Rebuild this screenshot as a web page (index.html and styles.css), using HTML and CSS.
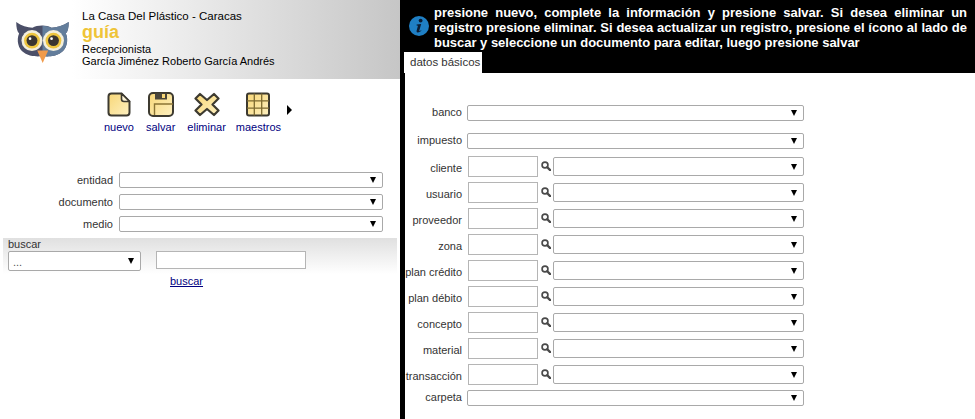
FILE: index.html
```html
<!DOCTYPE html>
<html lang="es">
<head>
<meta charset="utf-8">
<title>guía</title>
<link rel="stylesheet" href="styles.css">
</head>
<body>
<svg class="defs" width="0" height="0" aria-hidden="true">
  <defs>
    <linearGradient id="gold" x1="0" y1="0" x2="1" y2="1">
      <stop offset="0" stop-color="#f8d777"/>
      <stop offset="1" stop-color="#fdf0c0"/>
    </linearGradient>
    <symbol id="lupa" viewBox="0 0 12 12">
      <circle cx="4.800" cy="4.800" r="3.500" fill="#fff" stroke="#4a4a4a" stroke-width="2"/>
      <path d="M7.500 7.500 L11 11" stroke="#4a4a4a" stroke-width="2.800" stroke-linecap="round"/>
    </symbol>
  </defs>
</svg>
<div class="page">
  <aside class="left">
    <header class="head">
      <svg class="owl" viewBox="0 0 56 44" width="54" height="42">
        <path d="M1 1 C6 5 13 7 18 7 C23 4 33 4 38 7 C43 7 50 5 56 1 C56 7 55 11 53 13 C56 20 54 29 48 33 C41 38 34 37 28.500 37 C23 37 16 38 9 33 C3 29 1 20 4 13 C2 11 1 7 1 1 Z" fill="#4b4f68"/>
        <path d="M28.500 5 C32 5 35 6 38 7 C43 7 50 5 56 1 C56 7 55 11 53 13 C56 20 54 29 48 33 C41 38 34 37 28.500 37 Z" fill="#637d9b"/>
        <circle cx="17.500" cy="20.500" r="11" fill="#f3eedb"/>
        <circle cx="40" cy="20.500" r="11" fill="#f3eedb"/>
        <circle cx="17.500" cy="20.500" r="8.300" fill="#eec53e"/>
        <circle cx="40" cy="20.500" r="8.300" fill="#eec53e"/>
        <circle cx="17.500" cy="20.500" r="5.700" fill="#3a3530"/>
        <circle cx="40" cy="20.500" r="5.700" fill="#3a3530"/>
        <circle cx="15.500" cy="18.500" r="1.400" fill="#fff"/>
        <circle cx="38" cy="18.500" r="1.400" fill="#fff"/>
        <path d="M23 31 L34.500 31 L28.700 44 Z" fill="#f09a4a"/>
      </svg>
      <div class="head-text">
        <div class="company">La Casa Del Plástico - Caracas</div>
        <div class="app">guía</div>
        <div>Recepcionista</div>
        <div>García Jiménez Roberto García Andrés</div>
      </div>
    </header>

    <nav class="tools">
      <a class="tool">
        <svg viewBox="0 0 24 25" width="24" height="25"><path d="M1.500 4.500 Q1.500 1.500 4.500 1.500 L14.500 1.500 L22.500 9.500 L22.500 20.500 Q22.500 23.500 19.500 23.500 L4.500 23.500 Q1.500 23.500 1.500 20.500 Z" fill="url(#gold)" stroke="#3d3a30" stroke-width="2" stroke-linejoin="round"/><path d="M14.500 1.500 L14.500 7 Q14.500 9.500 17 9.500 L22.500 9.500 Z" fill="#fff6d8" stroke="#3d3a30" stroke-width="1.600" stroke-linejoin="round"/></svg>
        <span>nuevo</span>
      </a>
      <a class="tool">
        <svg viewBox="0 0 26 25" width="26" height="25"><rect x="1" y="1" width="24" height="23" rx="4" fill="url(#gold)" stroke="#3d3a30" stroke-width="2"/><rect x="7" y="1.500" width="12" height="6" fill="#4b463a"/><rect x="14" y="2" width="3" height="4" fill="#f8d777"/><path d="M6.500 23 L6.500 12 L25 12" fill="none" stroke="#8a7434" stroke-width="1.400"/></svg>
        <span>salvar</span>
      </a>
      <a class="tool tool-del">
        <svg viewBox="0 0 26 25" width="26" height="25"><path d="M6 2 L13 8 L20 2 L24.500 6.500 L18.500 12.500 L24.500 18.500 L20 23 L13 17 L6 23 L1.500 18.500 L7.500 12.500 L1.500 6.500 Z" fill="url(#gold)" stroke="#3d3a30" stroke-width="2.200" stroke-linejoin="round"/></svg>
        <span>eliminar</span>
      </a>
      <a class="tool tool-last">
        <svg viewBox="0 0 24 25" width="24" height="25"><rect x="1" y="1.500" width="22" height="22" rx="2" fill="url(#gold)" stroke="#3d3a30" stroke-width="2"/><path d="M8.300 1.500 V23.500 M15.700 1.500 V23.500 M1 8.800 H23 M1 16.200 H23" stroke="#7d6a30" stroke-width="1.300" fill="none"/></svg>
        <span>maestros</span>
      </a>
      <i class="more"></i>
    </nav>

    <section class="filters">
      <label class="fl">entidad</label><div class="sel"></div>
      <label class="fl">documento</label><div class="sel"></div>
      <label class="fl">medio</label><div class="sel"></div>
    </section>

    <section class="search">
      <div class="search-title">buscar</div>
      <div class="search-row">
        <div class="sel sel-search">...</div>
        <input class="inp inp-search" type="text">
      </div>
    </section>
    <a class="search-link" href="#">buscar</a>
  </aside>

  <main class="right">
    <div class="msg">
      <svg class="info" viewBox="0 0 21 21" width="20" height="20">
        <circle cx="10.500" cy="10.500" r="10.500" fill="#1f7fc4"/>
        <circle cx="12.200" cy="4.800" r="2" fill="#0b1c33"/>
        <path d="M8 9 L12.800 8.300 L10.800 15.200 Q10.600 16.200 11.500 15.800 L12.800 15 L13 15.600 Q10.800 17.600 9 17.400 Q7.600 17.200 8 15.400 L9.400 10.300 L8 10 Z" fill="#0b1c33"/>
      </svg>
      <p>presione nuevo, complete la información y presione salvar. Si desea eliminar un registro presione eliminar. Si desea actualizar un registro, presione el ícono al lado de buscar y seleccione un documento para editar, luego presione salvar</p>
    </div>
    <div class="tabs"><span class="tab">datos básicos</span></div>
    <form class="form">
      <label>banco</label><div class="sel span"></div>
      <label>impuesto</label><div class="sel span"></div>
      <label>cliente</label><input class="inp" type="text"><svg class="lupa"><use href="#lupa"/></svg><div class="sel"></div>
      <label>usuario</label><input class="inp" type="text"><svg class="lupa"><use href="#lupa"/></svg><div class="sel"></div>
      <label>proveedor</label><input class="inp" type="text"><svg class="lupa"><use href="#lupa"/></svg><div class="sel"></div>
      <label>zona</label><input class="inp" type="text"><svg class="lupa"><use href="#lupa"/></svg><div class="sel"></div>
      <label>plan crédito</label><input class="inp" type="text"><svg class="lupa"><use href="#lupa"/></svg><div class="sel"></div>
      <label>plan débito</label><input class="inp" type="text"><svg class="lupa"><use href="#lupa"/></svg><div class="sel"></div>
      <label>concepto</label><input class="inp" type="text"><svg class="lupa"><use href="#lupa"/></svg><div class="sel"></div>
      <label>material</label><input class="inp" type="text"><svg class="lupa"><use href="#lupa"/></svg><div class="sel"></div>
      <label>transacción</label><input class="inp" type="text"><svg class="lupa"><use href="#lupa"/></svg><div class="sel"></div>
      <label>carpeta</label><div class="sel span"></div>
    </form>
  </main>
</div>
</body>
</html>
```

FILE: styles.css
```css
* { box-sizing: border-box; }
html, body { margin: 0; height: 100%; overflow: hidden; background: #fff; }
body { font: 11px/14px "Liberation Sans", Arial, sans-serif; color: #333; }
.defs { position: absolute; }
.page { display: flex; width: 975px; height: 419px; }

.left { width: 400px; flex: none; }
.head { display: flex; height: 79px; padding: 10px 0 0 15px; background: linear-gradient(90deg, #fff 18%, #c6c6c6 100%); color: #000; }
.owl { margin-top: 11px; flex: none; }
.head-text { margin-left: 13px; line-height: 12px; font-size: 11px; }
.company { font-size: 11.500px; }
.app { font-size: 18px; line-height: 21px; font-weight: bold; color: #efc437; }

.tools { display: flex; padding: 13px 0 0 104px; align-items: flex-start; }
.tool { display: flex; flex-direction: column; align-items: center; color: #000080; line-height: 12px; margin-right: 12px; gap: 4px; }
.tool-del { margin-right: 10px; }
.tool-last { margin-right: 6px; }
.tool svg { display: block; }
.more { width: 0; height: 0; margin-top: 13px; border-left: 5px solid #000; border-top: 5px solid transparent; border-bottom: 5px solid transparent; }

.filters { display: grid; grid-template-columns: 113px 264px; column-gap: 6px; row-gap: 6px; margin-top: 39px; justify-items: end; }
.fl { line-height: 16px; align-self: center; }
.sel { position: relative; width: 100%; height: 16px; background: #fff; border: 1px solid #a9a9a9; border-radius: 2px; }
.sel::after { content: ""; position: absolute; right: 6px; top: 50%; margin-top: -3px; border-top: 6px solid #000; border-left: 3px solid transparent; border-right: 3px solid transparent; }

.search { margin: 6px 3px 0; height: 36px; padding: 0 5px; background: linear-gradient(180deg, #e0e0e0 0%, #fff 100%); }
.search-title { line-height: 13px; }
.search-row { display: flex; gap: 15px; align-items: flex-start; }
.sel-search { width: 133px; height: 20px; padding: 4px 4px 0; color: #555; line-height: 12px; flex: none; }
.inp { display: block; height: 21px; background: #fff; border: 1px solid #b5b5b5; padding: 0; margin: 0; }
.inp-search { width: 150px; height: 18px; }
.search-link { display: block; margin-left: 170px; color: #000080; text-decoration: underline; }

.right { flex: 1; display: flex; flex-direction: column; background: #000; }
.msg { display: flex; height: 52px; padding: 5px 8px 0 9px; color: #fff; }
.info { flex: none; margin-top: 11px; }
.msg p { margin: 0 0 0 5px; font-weight: bold; font-size: 13px; line-height: 15px; text-align: justify; letter-spacing: -0.020px; }
.tabs { display: flex; height: 21px; padding-left: 4px; }
.tab { background: #fff; width: 78px; padding: 3px 0 0 6px; font-size: 11.500px; }
.form { flex: 1; margin-left: 5px; background: #fff; display: grid; grid-template-columns: 63px 70px 15px 251px; grid-template-rows: 23px 18px repeat(10, 21px); row-gap: 5px; align-content: start; padding-top: 32px; align-items: center; justify-items: start; }
.form label { justify-self: end; margin: 2px 6px 0 0; white-space: nowrap; }
.form .inp { width: 70px; }
.form .sel { height: 19px; }
.form .span { grid-column: 2 / 5; align-self: start; margin-left: -1px; width: 337px; height: 16px; }
.form label:has(+ .span) { align-self: start; margin-top: 0; }
.lupa { width: 10px; height: 10px; margin: -1px 0 0 3px; }
```
